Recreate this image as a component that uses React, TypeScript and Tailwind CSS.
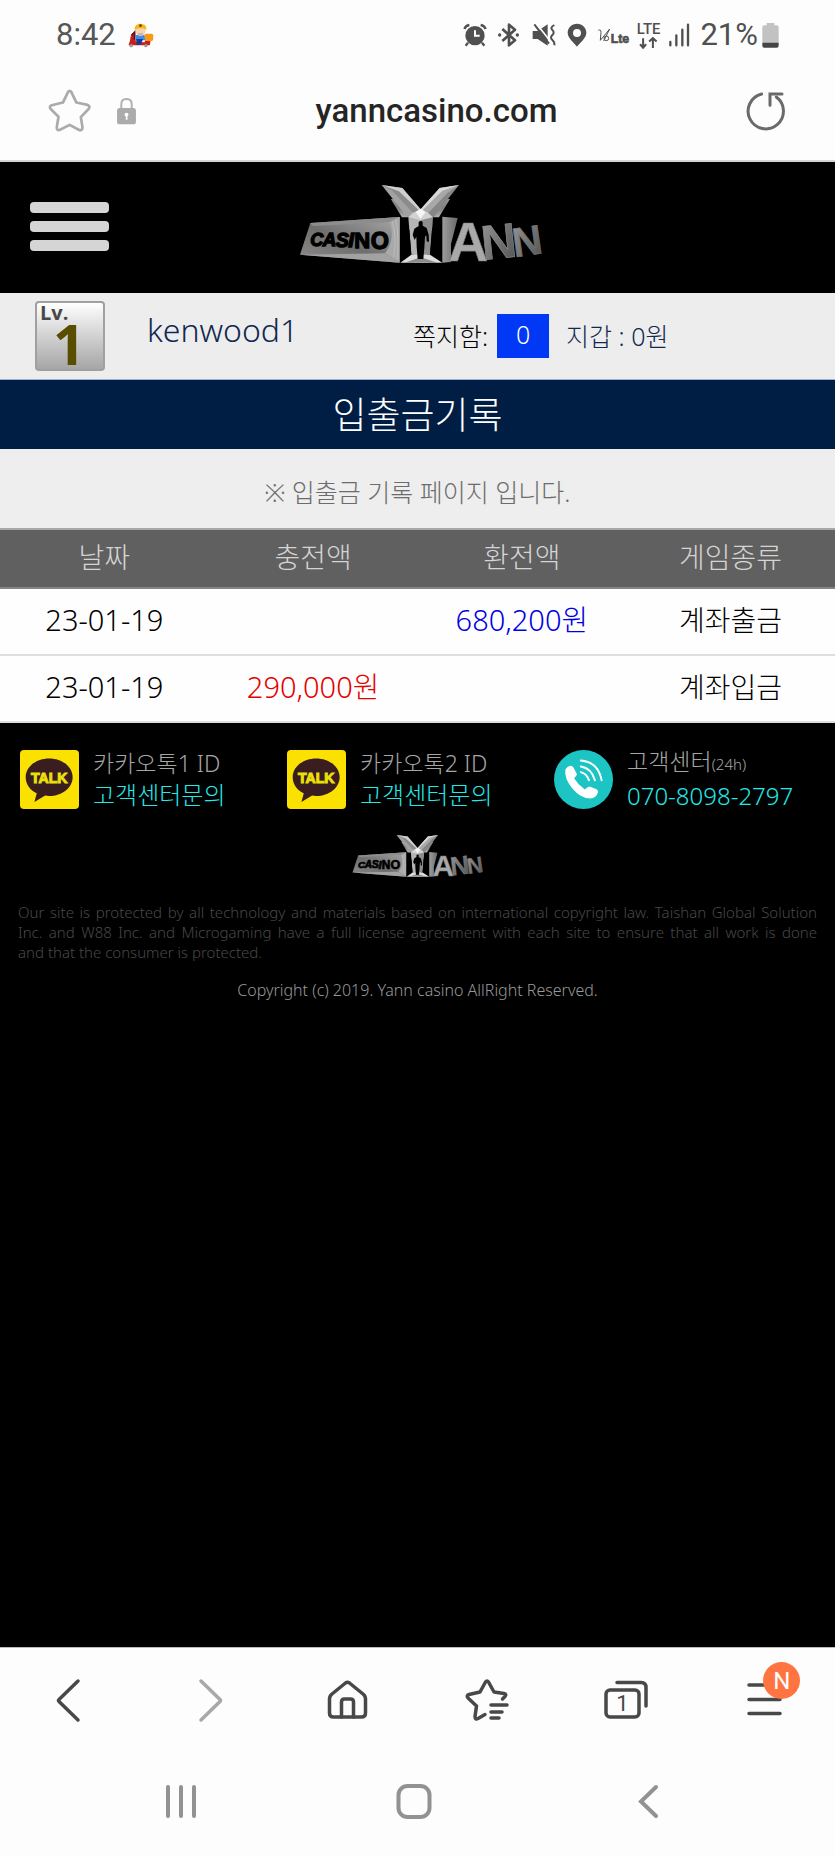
import React, { useId } from "react";

const sans = "font-['Noto_Sans','Noto_Sans_CJK_KR',sans-serif]";
const roboto = "font-['Roboto',sans-serif]";

function YannLogo({ className }: { className: string }) {
  const id = useId();
  const ref = (name: string) => `url(#${id}${name})`;
  return (
    <svg viewBox="60 54 735 240" className={className} overflow="visible" role="img" aria-label="Casino Yann">
      <defs>
        <linearGradient id={`${id}plate`} x1="0" y1="1" x2="1" y2="0">
          <stop offset="0" stopColor="#8c8c8c" />
          <stop offset="0.45" stopColor="#6f6f6f" />
          <stop offset="1" stopColor="#a8a8a8" />
        </linearGradient>
        <linearGradient id={`${id}y`} x1="0" y1="0" x2="0" y2="1">
          <stop offset="0" stopColor="#c4c4c4" />
          <stop offset="0.28" stopColor="#7e7e7e" />
          <stop offset="0.45" stopColor="#d8d8d8" />
          <stop offset="1" stopColor="#9a9a9a" />
        </linearGradient>
        <linearGradient id={`${id}n`} x1="0" y1="0" x2="1" y2="1">
          <stop offset="0" stopColor="#9a9a9a" />
          <stop offset="1" stopColor="#4e4e4e" />
        </linearGradient>
        <linearGradient id={`${id}side`} x1="0" y1="0" x2="1" y2="0">
          <stop offset="0" stopColor="#9d9d9d" />
          <stop offset="1" stopColor="#6a6a6a" />
        </linearGradient>
      </defs>
      <path d="M94 171 362 153V290L63 266Z" fill={ref("plate")} />
      <path d="M94 171 362 153 332 168 102 180Z" fill="#8d8d8d" />
      <path d="M362 153V290L318 262Q350 220 332 168Z" fill="#a9a9a9" />
      <path d="M63 266 318 262 362 290Z" fill="#a2a2a2" />
      <path d="M340 166Q354 215 344 272M350 160Q362 215 354 280" stroke="#c6c6c6" strokeWidth="2" fill="none" />
      <g fontFamily="'Liberation Sans',sans-serif" fontWeight="700" fill="#000" stroke="#000" strokeWidth="4">
        <text x="94" y="240" fontSize="54" fontStyle="italic">C</text>
        <text x="131" y="241" fontSize="56" fontStyle="italic">A</text>
        <text x="170" y="243" fontSize="59" fontStyle="italic">S</text>
        <text x="208" y="244" fontSize="62" fontStyle="italic">I</text>
        <text x="226" y="246" fontSize="66">N</text>
        <text x="275" y="248" fontSize="70">O</text>
      </g>
      <g fontFamily="'Liberation Sans',sans-serif" fontWeight="700">
        <text x="424" y="290" fontSize="280" textAnchor="middle" fill={ref("y")}>Y</text>
        <path d="M308 57 370 66 425 130 412 150Z" fill="#8b8b8b" />
        <path d="M308 57 370 66 425 130 425 138 360 76Z" fill="#cfcfcf" />
        <path d="M308 57 340 74 413 152 390 160Z" fill="#a2a2a2" />
        <path d="M540 57 482 66 425 130 437 152Z" fill="#a8a8a8" />
        <path d="M540 57 482 66 425 130 425 138 490 74Z" fill="#d9d9d9" />
        <path d="M540 57 506 80 437 152 460 158Z" fill="#868686" />
        <path d="M402 140 425 130 447 140 462 154 425 165 388 154Z" fill="#d2d2d2" />
        <path d="M410 138 425 128 440 138 425 158Z" fill="#f6f6f6" />
        <path d="M388 154 425 163V266H397Z" fill="#b4b4b4" />
        <path d="M462 154 425 163V266H453Z" fill="#8e8e8e" />
        <path d="M364 154H388L397 266 364 288Z" fill="#000" />
        <path d="M462 154H490V288L453 266Z" fill="#000" />
        <path d="M364 290 397 266H453L490 290Z" fill="#dedede" />
        <path d="M376 290 425 274 476 290Z" fill="#8c8c8c" />
        <path d="M419 168Q425 162 431 168V179L443 186 449 206 450 228 443 226 442 208 438 212 436 246 433 279H416L413 242 412 212 407 222 401 207 406 188 419 180Z" fill="#000" />
        <path d="M490 152 536 156 516 234V288L490 290Z" fill={ref("side")} />
        <text x="508" y="285" fontSize="166" fill="#a9a9a9" stroke="#777" strokeWidth="2">A</text>
        <text x="612" y="282" fontSize="146" fill={ref("n")} stroke="#8b8b8b" strokeWidth="2" transform="rotate(-6 612 282)">N</text>
        <text x="706" y="274" fontSize="124" fill={ref("n")} stroke="#777" strokeWidth="2" transform="rotate(-8 706 274)">N</text>
      </g>
    </svg>
  );
}

function StatusIcons() {
  return (
    <div className="flex items-center gap-[10px] text-[#505050]">
      <svg viewBox="132 70 72 72" className="size-6" aria-label="Alarm">
        <circle cx="168" cy="108" r="29" fill="currentColor" />
        <path d="M136 88Q140 78 151 76M200 88Q196 78 185 76M147 129 140 138M189 129 196 138" stroke="currentColor" strokeWidth="7" fill="none" />
        <path d="M168 92V108H182" stroke="#fff" strokeWidth="6" fill="none" />
      </svg>
      <svg viewBox="234 70 72 72" className="size-6" aria-label="Bluetooth">
        <path d="M250 88 288 122 270 137V75L288 90 250 124" stroke="currentColor" strokeWidth="8" fill="none" strokeLinejoin="round" />
        <circle cx="242" cy="106" r="5" fill="currentColor" />
        <circle cx="295" cy="106" r="5" fill="currentColor" />
      </svg>
      <svg viewBox="332 70 78 72" className="h-6 w-[26px]" aria-label="Muted">
        <path d="M337 94H352L382 74V138L352 118H337Z" fill="currentColor" />
        <path d="M345 68 396 132" stroke="#fff" strokeWidth="5" />
        <path d="M342 74 386 132" stroke="currentColor" strokeWidth="6" />
        <path d="M402 76Q388 84 396 91T396 106 396 121 402 137" stroke="currentColor" strokeWidth="6" fill="none" />
      </svg>
      <svg viewBox="440 70 60 72" className="h-6 w-5" aria-label="Location">
        <path fillRule="evenodd" d="M470 72C454 72 442 84 442 99C442 116 462 129 470 141C478 129 498 116 498 99C498 84 486 72 470 72ZM470 88A12 12 0 1 1 470 112A12 12 0 1 1 470 88Z" fill="currentColor" />
      </svg>
      <svg viewBox="528 70 96 72" className="h-6 w-8" overflow="visible" aria-label="VoLTE">
        <path d="M532 92Q540 88 540 98L538 122 566 88M566 88 548 124" stroke="currentColor" strokeWidth="3" fill="none" />
        <circle cx="556" cy="116" r="7" stroke="currentColor" strokeWidth="3" fill="none" />
        <text x="569" y="129" fontSize="37" fontWeight="700" fontFamily="'Liberation Sans',sans-serif" fill="currentColor" stroke="currentColor" strokeWidth="2">Lte</text>
      </svg>
      <svg viewBox="640 66 80 80" className="-mx-1 h-[27px] w-[27px]" overflow="visible" aria-label="LTE">
        <text x="680" y="103" fontSize="44" fontWeight="500" textAnchor="middle" fontFamily="Roboto,sans-serif" fill="currentColor">LTE</text>
        <path d="M664 114V141M655 132 664 142 673 132M693 143V115M682 124 693 114 704 124" stroke="currentColor" strokeWidth="6" fill="none" />
      </svg>
      <svg viewBox="747 70 66 72" className="h-6 w-[22px]" aria-label="Signal">
        <path d="M754 127V137M772 107V137M790 90V137M807 75V137" stroke="currentColor" strokeWidth="7" strokeLinecap="round" />
      </svg>
      <span className="flex items-center gap-1">
        <span className="text-[31px] leading-10">21%</span>
        <svg viewBox="1028 67 51 75" className="h-[25px] w-[17px]" aria-label="Battery">
          <path d="M1042 67H1065V74H1072Q1078 74 1078 80V128H1029V80Q1029 74 1035 74H1042Z" fill="#c2c2c2" />
          <path d="M1029 126H1078V135Q1078 141 1072 141H1035Q1029 141 1029 135Z" fill="#454545" />
        </svg>
      </span>
    </div>
  );
}

function Scooter() {
  return (
    <svg viewBox="376 70 80 75" className="h-[25px] w-[27px]" aria-label="Delivery">
      <path d="M388 104 400 96 402 126 428 128 436 112 446 124 444 137H380L384 124Z" fill="#c8201c" />
      <rect x="428" y="102" width="26" height="22" rx="5" fill="#f99a12" />
      <path d="M400 106H428L430 122H402Z" fill="#3f8bf0" />
      <path d="M403 118H424L416 135H404Z" fill="#123a9c" />
      <path d="M390 106 399 96 397 120" stroke="#5b1210" strokeWidth="4" fill="none" />
      <circle cx="416" cy="94" r="15" fill="#f3d3b4" />
      <path d="M398 90Q398 72 416 72T434 90Q416 82 398 90Z" fill="#fbb50f" />
      <circle cx="416" cy="78" r="4" fill="#5a4010" />
      <path d="M410 102Q416 106 422 102" stroke="#a05a40" strokeWidth="2" fill="none" />
      <circle cx="388" cy="138" r="5" fill="#999" />
      <circle cx="432" cy="138" r="5" fill="#999" />
    </svg>
  );
}

function TalkIcon() {
  return (
    <svg viewBox="0 0 176 176" className="size-[59px] shrink-0" aria-hidden="true">
      <rect width="176" height="176" rx="12" fill="#fae100" />
      <path d="M87 25C48 25 17 50 17 81C17 102 30 119 50 129L43 155 75 136Q81 137 87 137C126 137 157 112 157 81C157 50 126 25 87 25Z" fill="#3a1d1e" />
      <text x="87" y="97" fontSize="42" fontWeight="700" textAnchor="middle" fontFamily="'Liberation Sans',sans-serif" fill="#ece00a" stroke="#ece00a" strokeWidth="3">TALK</text>
    </svg>
  );
}

function PhoneIcon() {
  return (
    <svg viewBox="0 0 176 176" className="size-[59px] shrink-0" aria-hidden="true">
      <circle cx="88" cy="88" r="88" fill="#1cc4c4" />
      <path d="M34 58Q40 48 50 47Q55 47 58 52L68 71Q69 76 60 84Q72 104 92 118Q101 109 106 109L127 117Q133 121 131 127Q126 144 108 145Q78 143 54 114Q30 84 34 58Z" fill="#fff" />
      <path d="M80 66Q98 71 104 90M80 49Q112 54 122 90M80 31Q132 36 142 90" stroke="#fff" strokeWidth="6" fill="none" strokeLinecap="round" />
    </svg>
  );
}

const contacts = [
  { icon: <TalkIcon />, title: "카카오톡1 ID", note: "", value: "고객센터문의" },
  { icon: <TalkIcon />, title: "카카오톡2 ID", note: "", value: "고객센터문의" },
  { icon: <PhoneIcon />, title: "고객센터", note: "(24h)", value: "070-8098-2797" },
];

const records = [
  { date: "23-01-19", deposit: "", withdrawal: "680,200원", kind: "계좌출금" },
  { date: "23-01-19", deposit: "290,000원", withdrawal: "", kind: "계좌입금" },
];

const toolbar = [
  {
    label: "Back",
    icon: <path d="M29 1 10 19.500Q9 20.500 10 21.500L29 40" />,
  },
  {
    label: "Forward",
    muted: true,
    icon: <path d="M13 1 32 19.500Q33 20.500 32 21.500L13 40" />,
  },
  {
    label: "Home",
    icon: (
      <>
        <path d="M18.500 3Q20.500 1.500 22.500 3L36 14Q38.500 16 38.500 19V33Q38.500 37 34.500 37H6.500Q2.500 37 2.500 33V19Q2.500 16 5 14Z" />
        <path d="M14.500 37V22Q14.500 19 17.500 19H23.500Q26.500 19 26.500 22V37" />
      </>
    ),
  },
  {
    label: "Bookmarks",
    icon: (
      <>
        <path d="M36.500 19 39 16.500Q41 14 38 13.500L28 12 22.500 2Q21 0 19.500 2L14 12 3 14.500Q0 15.500 2 18L10.500 26 9 36.500Q9 40 12 38.500L19 34.500" />
        <path d="M25 25H41M25 32H36M25 38H33" />
      </>
    ),
  },
  {
    label: "Tabs",
    icon: (
      <>
        <rect x="1" y="10" width="33" height="27" rx="4" />
        <path d="M12 2.500H36Q41 2.500 41 7.500V26" />
        <text x="17.500" y="31" fontSize="22" fontWeight="400" textAnchor="middle" fontFamily="Roboto,sans-serif" fill="currentColor" stroke="none">1</text>
      </>
    ),
  },
  {
    label: "Menu",
    badge: "N",
    icon: <path d="M5 5H36M5 19.500H36M5 33.500H36" />,
  },
];

export default function App() {
  return (
    <div className={`flex min-h-screen w-full flex-col bg-[#fdfdfd] font-light ${sans}`}>
      <header className={`border-b-2 border-[#d4d4d4] ${roboto}`}>
        <div className="flex h-[70px] items-center justify-between pr-14 pl-14">
          <div className="flex items-center gap-[11px] text-[31px] font-normal leading-10 text-[#575757]">
            <span>8:42</span>
            <Scooter />
          </div>
          <div className="font-normal">
            <StatusIcons />
          </div>
        </div>
        <div className="grid h-[90px] grid-cols-[1fr_auto_1fr] items-center pb-2">
          <div className="flex items-center gap-6 pl-12">
            <button type="button" aria-label="Bookmark this page">
              <svg viewBox="147 267 130 130" className="size-11" fill="none" stroke="#ababab" strokeWidth="8" strokeLinejoin="round">
                <path d="M206 276Q211 269 216 276L231 307 264 314Q273 318 267 326L244 350 249 381Q248 391 239 388L211 373 181 388Q172 390 173 380L178 349 155 326Q149 318 158 315L191 307Z" />
              </svg>
            </button>
            <svg viewBox="350 288 64 86" className="h-7 w-[21px]" aria-label="Secure">
              <path d="M366 325V310Q366 294 382 294T398 310V325" fill="none" stroke="#b0b0b0" strokeWidth="6" />
              <rect x="353" y="322" width="58" height="50" rx="8" fill="#ababab" />
              <circle cx="382" cy="342" r="6" fill="#fff" />
              <path d="M380 342H385V358H380Z" fill="#fff" />
            </svg>
          </div>
          <p className="pl-[38px] text-[33px] font-medium leading-10 text-[#252525]">yanncasino.com</p>
          <div className="flex justify-end pr-[50px]">
            <button type="button" aria-label="Reload">
              <svg viewBox="974 272 120 120" className="size-10" fill="none" stroke="#6a6a6a" strokeWidth="9" strokeLinecap="round">
                <path d="M1024 281A53 53 0 1 0 1068 290" />
                <path d="M1049 315V281H1085" />
              </svg>
            </button>
          </div>
        </div>
      </header>

      <main className="flex flex-1 flex-col bg-black">
        <div className="grid h-[131px] grid-cols-[1fr_auto_1fr] items-center">
          <button type="button" aria-label="Menu" className="mb-[2px] ml-[30px] flex w-[79px] flex-col gap-2">
            <span className="h-[11px] w-full rounded-[4px] bg-[#d5d5d5]" />
            <span className="h-[11px] w-full rounded-[4px] bg-[#d5d5d5]" />
            <span className="h-[11px] w-full rounded-[4px] bg-[#d5d5d5]" />
          </button>
          <a href="#home" className="ml-2 pb-2">
            <YannLogo className="h-20 w-[245px]" />
          </a>
        </div>

        <section className="flex h-[87px] items-center border-b border-[#9fb0cc] bg-[#ededed] pl-[35px]">
          <div className="flex h-[70px] w-[70px] shrink-0 flex-col overflow-hidden rounded-[4px] border-2 border-[#a0a0a0] bg-gradient-to-b from-white to-[#a6a6a6] font-['Open_Sans',sans-serif] font-bold">
            <span className="pl-[3px] text-xl leading-5 text-[#484848]">Lv.</span>
            <span className="pl-4 text-[56px] leading-10 text-[#594d00]">1</span>
          </div>
          <p className="w-[308px] pb-3 pl-[42px] text-[32px] leading-10 text-[#10294f]">kenwood1</p>
          <p className="flex items-center text-[25px] leading-8 text-black">
            쪽지함:
            <a href="#messages" className="ml-[9px] flex h-11 w-[52px] items-center justify-center bg-[#0038f5] pb-1 text-white">0</a>
          </p>
          <p className="ml-[17px] text-[25px] leading-8 text-[#10294f]">지갑 : 0원</p>
        </section>

        <h1 className="flex h-[69px] items-center justify-center bg-[#001d43] text-[37px] font-light leading-[52px] text-white">입출금기록</h1>
        <p className="flex h-[79px] items-center justify-center bg-[#eee] pt-[6px] text-[25px] leading-8 text-[#6c6c6c]">※ 입출금 기록 페이지 입니다.</p>

        <table className="w-full table-fixed border-collapse text-center text-[28px] leading-9">
          <thead>
            <tr className="h-[59px] border-t-2 border-b-2 border-t-[#a8a8a8] border-b-[#858585] bg-[#606060] text-[#d4d4d4]">
              <th className="pb-1 font-light" scope="col">날짜</th>
              <th className="pb-1 font-light" scope="col">충전액</th>
              <th className="pb-1 font-light" scope="col">환전액</th>
              <th className="pb-1 font-light" scope="col">게임종류</th>
            </tr>
          </thead>
          <tbody>
            {records.map((r) => (
              <tr key={r.kind} className="h-[67px] border-b-2 border-[#dedede] bg-[#fefefe] text-black">
                <td className="pb-1 text-[29px]">{r.date}</td>
                <td className="pb-1 text-[29px] text-[#e60000]">{r.deposit}</td>
                <td className="pb-1 text-[29px] text-[#0000e6]">{r.withdrawal}</td>
                <td className="pb-1">{r.kind}</td>
              </tr>
            ))}
          </tbody>
        </table>

        <footer>
          <div className="grid grid-cols-3 pt-[22px] pr-[14px] pl-5">
            {contacts.map((c) => (
              <div key={c.title} className="flex items-center gap-[14px]">
                {c.icon}
                <div className="pb-[2px] whitespace-nowrap">
                  <p className="text-[23px] leading-8 text-[#a6a6a6]">
                    {c.title}
                    {c.note && <span className="text-[15px]">{c.note}</span>}
                  </p>
                  <a href="#contact" className="block text-2xl leading-8 text-[#22eaea]">{c.value}</a>
                </div>
              </div>
            ))}
          </div>
          <YannLogo className="mx-auto mt-5 h-11 w-[132px]" />
          <p className="mt-6 px-[18px] text-justify text-[15px] leading-5 text-[#484848]">
            Our site is protected by all technology and materials based on international copyright law. Taishan Global Solution Inc. and W88 Inc. and Microgaming have a full license agreement with each site to ensure that all work is done and{"\u00a0"}that the consumer is protected.
          </p>
          <p className="mt-[18px] text-center text-base leading-5 text-[#999]">Copyright (c) 2019. Yann casino AllRight Reserved.</p>
        </footer>
      </main>

      <nav aria-label="Browser" className="grid h-[107px] grid-cols-6 items-center border-t border-[#bbb]">
        {toolbar.map((t) => (
          <button key={t.label} type="button" aria-label={t.label} className={`relative mx-auto ${t.muted ? "text-[#a8a8a8]" : "text-[#484848]"}`}>
            <svg viewBox="-2 -2 46 46" className="size-[46px]" fill="none" stroke="currentColor" strokeWidth="3.5" strokeLinecap="round" strokeLinejoin="round">
              {t.icon}
            </svg>
            {t.badge && (
              <span className={`absolute -top-4 -right-3 flex size-[37px] items-center justify-center rounded-full bg-[#ff7440] text-2xl font-normal text-white ${roboto}`}>{t.badge}</span>
            )}
          </button>
        ))}
      </nav>
      <nav aria-label="System" className="grid h-[102px] grid-cols-3 items-center pr-[70px] pb-2 pl-16 text-[#929292]">
        <button type="button" aria-label="Recent apps" className="mx-auto">
          <svg viewBox="0 0 36 36" className="size-9" stroke="currentColor" strokeWidth="4" strokeLinecap="round">
            <path d="M5 4V33M18 4V33M31 4V33" />
          </svg>
        </button>
        <button type="button" aria-label="Home screen" className="mx-auto">
          <svg viewBox="0 0 36 36" className="size-9" fill="none" stroke="currentColor" strokeWidth="4">
            <rect x="2.500" y="3" width="31" height="31" rx="9" />
          </svg>
        </button>
        <button type="button" aria-label="Go back" className="mx-auto">
          <svg viewBox="0 0 36 36" className="size-9" fill="none" stroke="currentColor" strokeWidth="4" strokeLinecap="round">
            <path d="M26 4 11 18.500 26 33" />
          </svg>
        </button>
      </nav>
    </div>
  );
}
